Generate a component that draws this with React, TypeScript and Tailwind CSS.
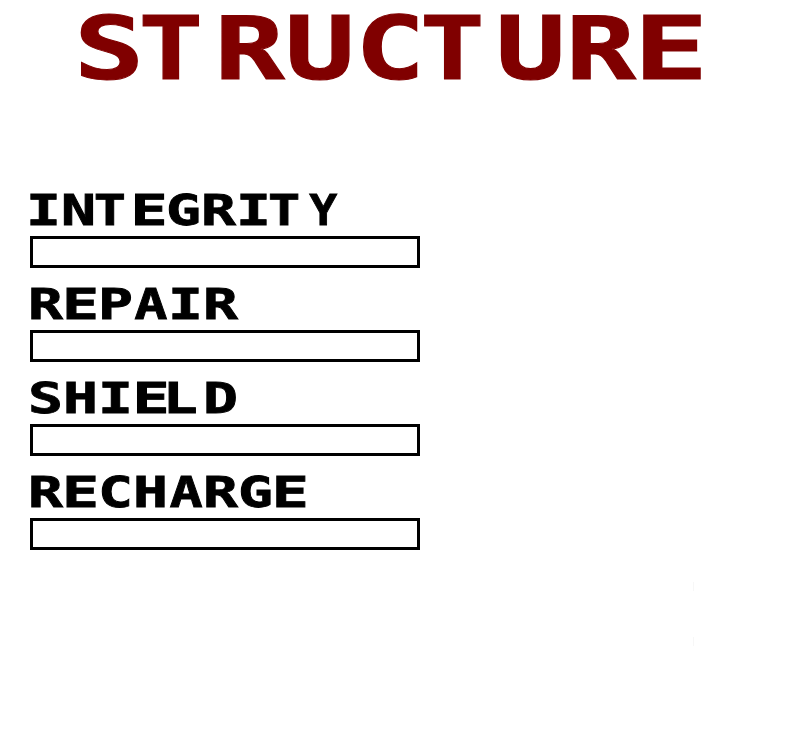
const gauges = ["INTEGRITY", "REPAIR", "SHIELD", "RECHARGE"];

const glyphFit: Record<string, string> = {
  T: "inline-block -translate-x-[0.07em] scale-x-[0.92]",
  L: "inline-block -translate-x-[0.09em]",
  Y: "inline-block scale-x-[0.8]",
  E: "inline-block scale-x-[1.06]",
  A: "inline-block scale-x-[0.95]",
};

function PixelText({ text }: { text: string }) {
  return (
    <>
      {text.split("").map((char, i) => (
        <span key={i} className={glyphFit[char]}>
          {char}
        </span>
      ))}
    </>
  );
}

function Gauge({ label }: { label: string }) {
  const inset = label.startsWith("I") ? "-ml-[4.5px]" : "-ml-[2.5px]";
  return (
    <div className="flex w-[390px] flex-col">
      <div className="h-[42px]">
        <div
          className={`origin-left scale-x-[1.352] whitespace-pre text-[43px] leading-[32px] will-change-transform [-webkit-text-stroke:0.8px_#000] ${inset}`}
        >
          <PixelText text={label} />
        </div>
      </div>
      <div className="h-8 border-[3px] border-black" />
    </div>
  );
}

export default function App() {
  return (
    <main className="flex h-[743px] w-[786px] flex-col bg-white font-['DejaVu_Sans_Mono','Liberation_Mono',monospace] font-bold text-black">
      <h1 className="ml-[74px] mt-[17px] h-16 w-[477px] origin-left scale-x-[1.341] whitespace-pre text-[87px] leading-[64px] text-[#800000] [-webkit-text-stroke:1px_#800000]">
        <PixelText text="STRUCTURE" />
      </h1>
      <section className="ml-[30px] mt-[113px] flex flex-col gap-5">
        {gauges.map((label) => (
          <Gauge key={label} label={label} />
        ))}
      </section>
      <div className="ml-[693px] mt-8 flex flex-col gap-[46px]">
        <div className="h-[9px] w-px bg-[#f7f7f7]" />
        <div className="h-[9px] w-px bg-[#f7f7f7]" />
      </div>
    </main>
  );
}
